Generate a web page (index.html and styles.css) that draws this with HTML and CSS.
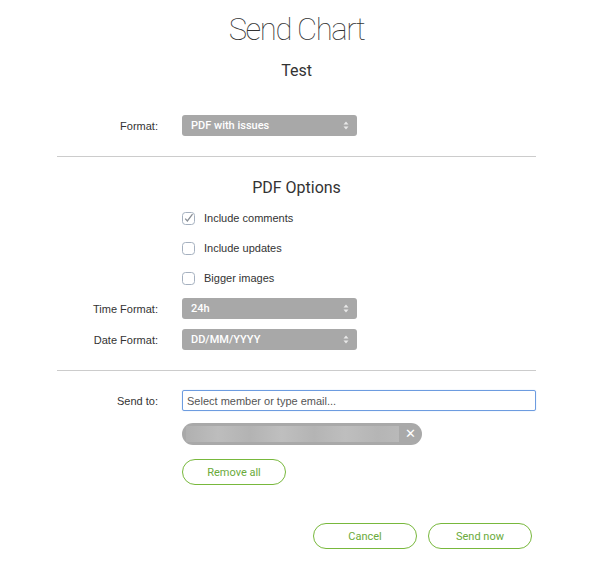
FILE: index.html
```html
<!DOCTYPE html>
<html>
<head>
<meta charset="utf-8">
<link rel="stylesheet" href="styles.css">
</head>
<body>
<div class="dialog">
  <h1 class="title">Send Chart</h1>
  <div class="subtitle">Test</div>

  <div class="row row-format">
    <div class="label">Format:</div>
    <div class="select"><span>PDF with issues</span><svg class="arrows" width="6" height="9" viewBox="0 0 6 9"><path d="M3 0.5L5.5 3.5H0.5Z M3 8.5L5.5 5.5H0.5Z" fill="#e8e8e8"/></svg></div>
  </div>

  <hr class="sep sep1">

  <div class="section-title">PDF Options</div>

  <div class="checks">
    <div class="check-row">
      <svg class="cb" width="13" height="13" viewBox="0 0 13 13"><rect x="0.5" y="0.5" width="12" height="12" rx="3" fill="#fff" stroke="#a5b0bf"/><path d="M3.2 6.6L5.4 9L10.5 2.2" fill="none" stroke="#8a8f96" stroke-width="1.3"/></svg>
      <span>Include comments</span>
    </div>
    <div class="check-row">
      <svg class="cb" width="13" height="13" viewBox="0 0 13 13"><rect x="0.5" y="0.5" width="12" height="12" rx="3" fill="#fff" stroke="#a5b0bf"/></svg>
      <span>Include updates</span>
    </div>
    <div class="check-row">
      <svg class="cb" width="13" height="13" viewBox="0 0 13 13"><rect x="0.5" y="0.5" width="12" height="12" rx="3" fill="#fff" stroke="#a5b0bf"/></svg>
      <span>Bigger images</span>
    </div>
  </div>

  <div class="row row-time">
    <div class="label">Time Format:</div>
    <div class="select"><span>24h</span><svg class="arrows" width="6" height="9" viewBox="0 0 6 9"><path d="M3 0.5L5.5 3.5H0.5Z M3 8.5L5.5 5.5H0.5Z" fill="#e8e8e8"/></svg></div>
  </div>
  <div class="row row-date">
    <div class="label">Date Format:</div>
    <div class="select"><span>DD/MM/YYYY</span><svg class="arrows" width="6" height="9" viewBox="0 0 6 9"><path d="M3 0.5L5.5 3.5H0.5Z M3 8.5L5.5 5.5H0.5Z" fill="#e8e8e8"/></svg></div>
  </div>

  <hr class="sep sep2">

  <div class="row row-send">
    <div class="label">Send to:</div>
    <div class="input">Select member or type email...</div>
  </div>

  <div class="indent chip-wrap">
    <div class="chip"><div class="chip-blur"></div><span class="chip-x">✕</span></div>
  </div>

  <div class="indent remove-wrap">
    <button class="btn btn-remove">Remove all</button>
  </div>

  <div class="actions">
    <button class="btn btn-action">Cancel</button>
    <button class="btn btn-action">Send now</button>
  </div>
</div>
</body>
</html>
```

FILE: styles.css
```css
html, body {
  margin: 0;
  padding: 0;
  background: #fff;
}

.dialog {
  margin-left: 57px;
  width: 479px;
  display: flex;
  flex-direction: column;
  font-family: "Liberation Sans", Arial, sans-serif;
  color: #333;
}

.title {
  margin: 12px 0 0;
  text-align: center;
  font-family: Roboto, sans-serif;
  font-weight: 100;
  font-size: 31px;
  line-height: 36px;
  color: #333;
  letter-spacing: -1.4px;
}

.subtitle {
  margin-top: 13px;
  text-align: center;
  font-family: Roboto, sans-serif;
  font-size: 16px;
  line-height: 20px;
  color: #333;
}

.row {
  display: flex;
  align-items: center;
  gap: 24px;
  height: 21px;
}

.label {
  width: 101px;
  text-align: right;
  font-size: 11px;
  color: #333;
}

.row-format { margin-top: 34px; }
.row-time { margin-top: 12px; }
.row-date { margin-top: 10px; }
.row-send { margin-top: 19px; }

.select {
  width: 175px;
  height: 21px;
  box-sizing: border-box;
  background: #a8a8a8;
  border-radius: 3px;
  display: flex;
  align-items: center;
  justify-content: space-between;
  padding: 0 8px 0 9px;
  font-family: Roboto, sans-serif;
  font-weight: 500;
  font-size: 11px;
  color: #fff;
}

.arrows { display: block; }

.sep {
  border: 0;
  border-top: 1px solid #ccc;
  margin: 0;
  height: 0;
}
.sep1 { margin-top: 20px; }
.sep2 { margin-top: 20px; }

.section-title {
  margin-top: 21px;
  text-align: center;
  font-family: Roboto, sans-serif;
  font-size: 16px;
  line-height: 20px;
  color: #333;
}

.checks {
  margin-top: 12px;
  margin-left: 125px;
  display: flex;
  flex-direction: column;
  gap: 14px;
}

.check-row {
  display: flex;
  align-items: center;
  gap: 9px;
  height: 16px;
  font-size: 11px;
  color: #333;
}

.cb { display: block; }

.input {
  width: 354px;
  height: 21px;
  box-sizing: border-box;
  border: 1px solid #6d9ce0;
  border-radius: 2px;
  box-shadow: 0 0 1px #9bbcee;
  padding: 0 4px;
  display: flex;
  align-items: center;
  font-size: 11px;
  color: #555;
}

.indent { padding-left: 125px; display: flex; }

.chip-wrap { margin-top: 12px; }

.chip {
  width: 240px;
  height: 22px;
  border-radius: 11px;
  background: #a9a9a9;
  display: flex;
  align-items: center;
  padding-left: 4px;
  box-sizing: border-box;
}

.chip-blur {
  width: 213px;
  height: 16px;
  background: linear-gradient(90deg, #b0b0b0 0%, #bdbdbd 15%, #b3b3b3 30%, #bfbfbf 45%, #b4b4b4 60%, #bebebe 75%, #b5b5b5 90%, #b9b9b9 100%);
}

.chip-x {
  flex: 1;
  text-align: center;
  color: #fff;
  font-family: "DejaVu Sans", sans-serif;
  font-size: 13px;
  font-weight: bold;
  line-height: 22px;
}

.remove-wrap { margin-top: 14px; }

.btn {
  box-sizing: border-box;
  height: 26px;
  border: 1px solid #78b83c;
  border-radius: 13px;
  background: #fff;
  color: #6aaa3a;
  font-family: Roboto, sans-serif;
  font-size: 11px;
  padding: 0;
  cursor: pointer;
}

.btn-remove { width: 104px; }

.actions {
  margin-top: 38px;
  display: flex;
  justify-content: flex-end;
  gap: 11px;
  padding-right: 4px;
}

.btn-action { width: 104px; }
```
